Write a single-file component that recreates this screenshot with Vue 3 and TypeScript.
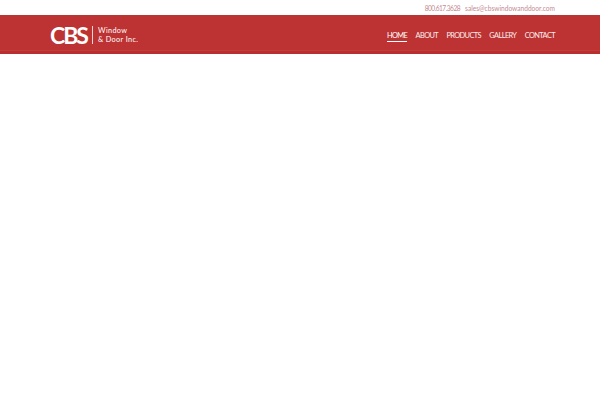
<script setup lang="ts">
const nav: string[] = ['HOME', 'ABOUT', 'PRODUCTS', 'GALLERY', 'CONTACT']
</script>

<template>
  <div class="page">
    <div class="topbar">
      <span class="contact phone">800.617.3628</span>
      <span class="contact">sales@cbswindowanddoor.com</span>
    </div>
    <header class="header">
      <div class="logo">
        <span class="mark">CBS</span>
        <span class="divider"></span>
        <span class="name">Window<br />&amp; Door Inc.</span>
      </div>
      <nav class="nav">
        <a v-for="(item, i) in nav" :key="item" class="link" :class="{ active: i === 0 }">{{ item }}</a>
      </nav>
    </header>
  </div>
</template>

<style>
html, body { margin: 0; background: #fff; }
</style>

<style scoped>
.page { width: 600px; height: 400px; background: #fff; font-family: Lato, "Open Sans", sans-serif; overflow: hidden; }
.topbar { height: 15px; box-sizing: border-box; padding-right: 45px; display: flex; justify-content: flex-end; align-items: center; gap: 5px; }
.contact { font-size: 6.6px; color: #c58a90; white-space: nowrap; }
.phone { letter-spacing: -0.5px; }
.header { height: 39px; box-sizing: border-box; background: #bd3232; box-shadow: inset 0 -3px 0 #b92f2f, inset 0 -4px 0 #c23c38; padding: 0 45px 0 50px; display: flex; justify-content: space-between; align-items: center; }
.logo { display: flex; align-items: center; color: #fff; }
.mark { font-family: Lato, sans-serif; font-weight: 700; font-size: 23px; letter-spacing: -2px; width: 37px; white-space: nowrap; }
.divider { width: 1px; height: 18px; background: #f0d5d5; margin: 0 5px; }
.name { font-family: Lato, sans-serif; font-size: 7.3px; line-height: 9px; letter-spacing: 0.35px; color: #ffffff; white-space: nowrap; }
.nav { display: flex; gap: 8.4px; }
.link { font-size: 7.4px; letter-spacing: -0.6px; color: #fbeeee; padding: 3px 0 1px; border-bottom: 1px solid transparent; white-space: nowrap; }
.link.active { color: #fff; border-bottom-color: #fff; }
</style>
